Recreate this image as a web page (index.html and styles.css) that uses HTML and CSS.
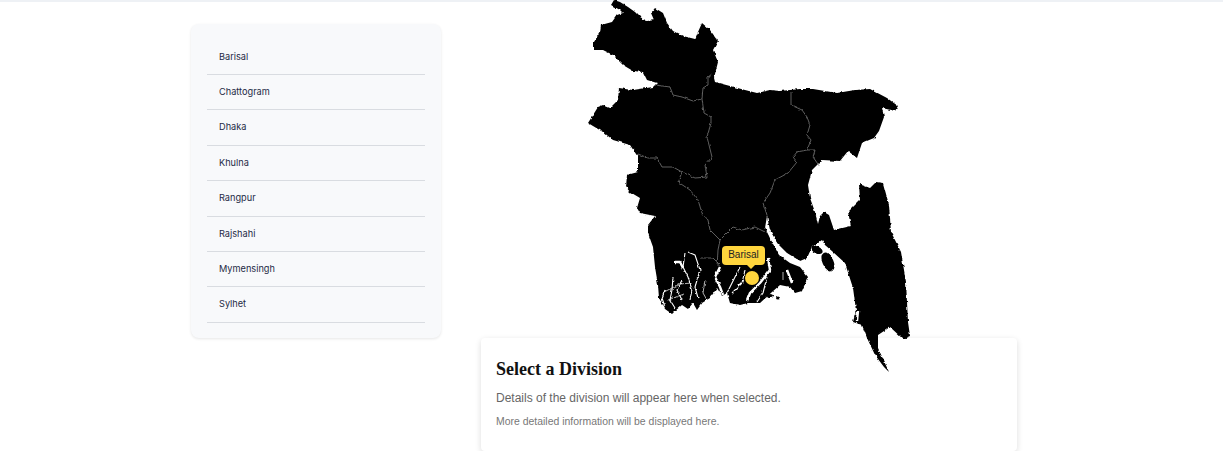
FILE: index.html
```html
<!DOCTYPE html>
<html lang="en">
<head>
  <meta charset="UTF-8">
  <meta name="viewport" content="width=device-width, initial-scale=1.0">
  <title>Bangladesh Divisions</title>
  <link rel="stylesheet" href="styles.css">
</head>
<body>
  <div class="top-line"></div>
  <div class="page">
    <ul class="division-list">
      <li>Barisal</li>
      <li>Chattogram</li>
      <li>Dhaka</li>
      <li>Khulna</li>
      <li>Rangpur</li>
      <li>Rajshahi</li>
      <li>Mymensingh</li>
      <li>Sylhet</li>
    </ul>
    <main class="content">
      <div class="map">
        <svg class="map-svg" viewBox="481 2 536 336" width="536" height="336" role="img" aria-label="Map of Bangladesh">
          <defs>
            <filter id="rough" filterUnits="userSpaceOnUse" x="570" y="-10" width="360" height="400">
              <feTurbulence type="fractalNoise" baseFrequency="0.22" numOctaves="2" seed="4"/>
              <feDisplacementMap in="SourceGraphic" scale="3" xChannelSelector="R" yChannelSelector="G"/>
            </filter>
          </defs>
          <g filter="url(#rough)">
            <polygon class="land" points="611,5 614,0 620,2 628,7 635,12 640,17 647,21 654,20 651,13 655,8 663,13 667,23 673,31 683,36 695,39 698,32 702,23 710,30 718,41 713,50 718,62 714,78 715,82 730,86 745,90 757,93 770,90 780,91 800,89 813,89 825,91 837,93 855,90 870,89 887,98 898,106 895,111 882,108 884,117 879,131 874,138 862,143 857,158 848,151 840,161 822,160 812,170 808,185 810,198 815,212 818,224 820,216 824,212 829,215 834,230 851,226 848,212 860,200 859,184 870,188 876,182 883,183 889,205 891,232 901,252 906,282 908,322 910,336 903,339 890,327 878,335 878,348 889,372 884,367 875,355 867,338 862,325 853,322 856,310 853,288 845,263 833,252 825,245 822,240 812,247 807,258 800,261 787,253 777,243 770,230 767,216 765,228 771,240 779,255 790,263 800,267 808,277 802,291 795,293 790,287 780,285 772,292 760,303 748,303 740,305 730,303 727,293 722,296 717,288 710,298 702,303 697,310 693,303 688,309 682,305 675,311 672,314 665,309 659,298 658,285 655,267 653,247 648,233 648,225 655,216 640,213 637,208 640,198 630,192 626,187 627,175 638,172 638,157 630,145 613,140 603,132 588,123 598,107 603,105 610,108 618,100 619,88 633,90 653,87 657,83 647,80 643,72 633,71 623,65 613,55 603,50 594,50 594,42 600,32 601,25 612,22 617,15 623,13 620,10"/>
            <ellipse class="land" cx="828" cy="262" rx="5.5" ry="10" transform="rotate(-25 828 262)"/>
            <ellipse class="land" cx="817" cy="250" rx="6" ry="3.5" transform="rotate(25 817 250)"/>
            <ellipse class="land" cx="770" cy="296" rx="3" ry="2"/>
            <ellipse class="land" cx="778" cy="298" rx="2" ry="1.5"/>
            <path class="border" d="M655 85 670 87 673 95 682 97 693 101 702 99 703 88 708 85 708 77 712 74"/>
            <path class="border" d="M702 99 704 113 711 117 711 123 707 137 712 157 705 165 707 177 695 178 682 172 673 167 662 167 657 158 648 158 638 154"/>
            <path class="border" d="M682 172 678 182 690 190 698 200 702 213 708 220 710 230 720 240 733 227 742 230 755 227 765 232"/>
            <path class="border" d="M720 240 718 250 717 267"/>
            <path class="border" d="M791 92 791 105 802 110 807 117 810 125 807 135 811 140 807 150 815 150 813 157 820 167"/>
            <path class="border" d="M807 150 797 152 793 157 797 162 788 173 775 180 770 193 763 203 767 215"/>
            <path class="border" d="M700 258 713 258 720 265"/>
            <path class="river thin" d="M688 252 695 255 700 270 695 287 698 298"/>
            <path class="river thin" d="M685 253 683 267 688 277 692 290 690 300"/>
            <path class="river thin" d="M673 277 672 290 670 300 675 308"/>
            <path class="river thin" d="M682 280 677 290 682 300"/>
            <path class="river thin" d="M665 290 662 298 665 307"/>
            <path class="river hair" d="M664 292 680 284 692 283"/>
            <path class="river hair" d="M668 300 684 294"/>
            <path class="river hair" d="M705 280 703 293 707 300"/>
            <path class="river thick" d="M675 262 680 262 683 268"/>
            <path class="river thick" d="M720 267 715 277 720 287 723 295"/>
            <path class="river thin" d="M740 267 735 277 727 293"/>
            <path class="river thin" d="M745 270 742 283 732 293"/>
            <path class="river thick" d="M768 258 770 270 760 283 750 293 747 301"/>
            <path class="river thin" d="M767 277 763 293 757 302"/>
            <path class="river wide" d="M771 236 779 250 790 258 803 264"/>
            <path class="river thick" d="M787 270 792 283"/>
            <path class="river hair" d="M783 272 783 280"/>
            <path class="river thick" d="M853 297 852 306"/>
            <path class="river thick" d="M858 311 857 321"/>
          </g>
        </svg>
        <div class="pin"></div>
        <div class="pin-label">Barisal</div>
      </div>
      <section class="info-card">
        <h2>Select a Division</h2>
        <p class="lead">Details of the division will appear here when selected.</p>
        <p class="more">More detailed information will be displayed here.</p>
      </section>
    </main>
  </div>
</body>
</html>
```

FILE: styles.css
```css
body {
  margin: 0;
  background: #ffffff;
  font-family: 'Liberation Sans', Arial, sans-serif;
}
.top-line {
  height: 2px;
  background: #eef1f5;
}
.page {
  display: flex;
  align-items: flex-start;
  gap: 40px;
  padding: 0 206px 0 191px;
}
.division-list {
  flex: 0 0 250px;
  box-sizing: border-box;
  margin: 21.6px 0 0;
  padding: 16px 16px 15px;
  list-style: none;
  background: #f8f9fb;
  border-radius: 8px;
  box-shadow: 0 1px 3px rgba(0, 0, 0, 0.1);
}
.division-list li {
  padding: 10px 12px;
  font-family: 'Inter', sans-serif;
  font-size: 9.2px;
  line-height: 14.4px;
  color: #1e2a45;
  border-bottom: 1px solid #d9dce1;
}
.content {
  flex: 1;
  min-width: 0;
}
.map {
  position: relative;
  z-index: 1;
  height: 336px;
}
.map-svg {
  display: block;
  overflow: visible;
}
.land {
  fill: #000000;
}
.border {
  fill: none;
  stroke: #777777;
  stroke-width: 0.8;
}
.river {
  fill: none;
  stroke: #ffffff;
  stroke-linejoin: round;
}
.wide {
  stroke-width: 3.5;
}
.thick {
  stroke-width: 2.4;
}
.thin {
  stroke-width: 1.1;
}
.hair {
  stroke-width: 0.7;
}
.pin {
  position: absolute;
  left: 264px;
  top: 269px;
  width: 14px;
  height: 14px;
  border-radius: 50%;
  background: #ffd53d;
}
.pin-label {
  position: absolute;
  left: 241px;
  top: 244px;
  width: 43px;
  height: 19px;
  border-radius: 4px;
  background: #ffd53d;
  font-size: 10px;
  line-height: 18px;
  text-align: center;
  color: #222222;
}
.pin-label::after {
  content: "";
  position: absolute;
  left: 25px;
  top: 19px;
  border-left: 4px solid transparent;
  border-right: 4px solid transparent;
  border-top: 4px solid #ffd53d;
}
.info-card {
  padding: 15px;
  height: 113px;
  box-sizing: border-box;
  background: #ffffff;
  border-radius: 4px;
  box-shadow: 0 2px 6px rgba(0, 0, 0, 0.14);
}
.info-card h2 {
  margin: 6px 0 0;
  font-family: 'Liberation Serif', 'Times New Roman', serif;
  font-size: 18px;
  line-height: 20px;
  color: #111111;
}
.lead {
  margin: 12px 0 0;
  font-size: 12px;
  line-height: 14px;
  color: #666666;
}
.more {
  margin: 11px 0 0;
  font-size: 10.45px;
  line-height: 12px;
  color: #777777;
}
```
